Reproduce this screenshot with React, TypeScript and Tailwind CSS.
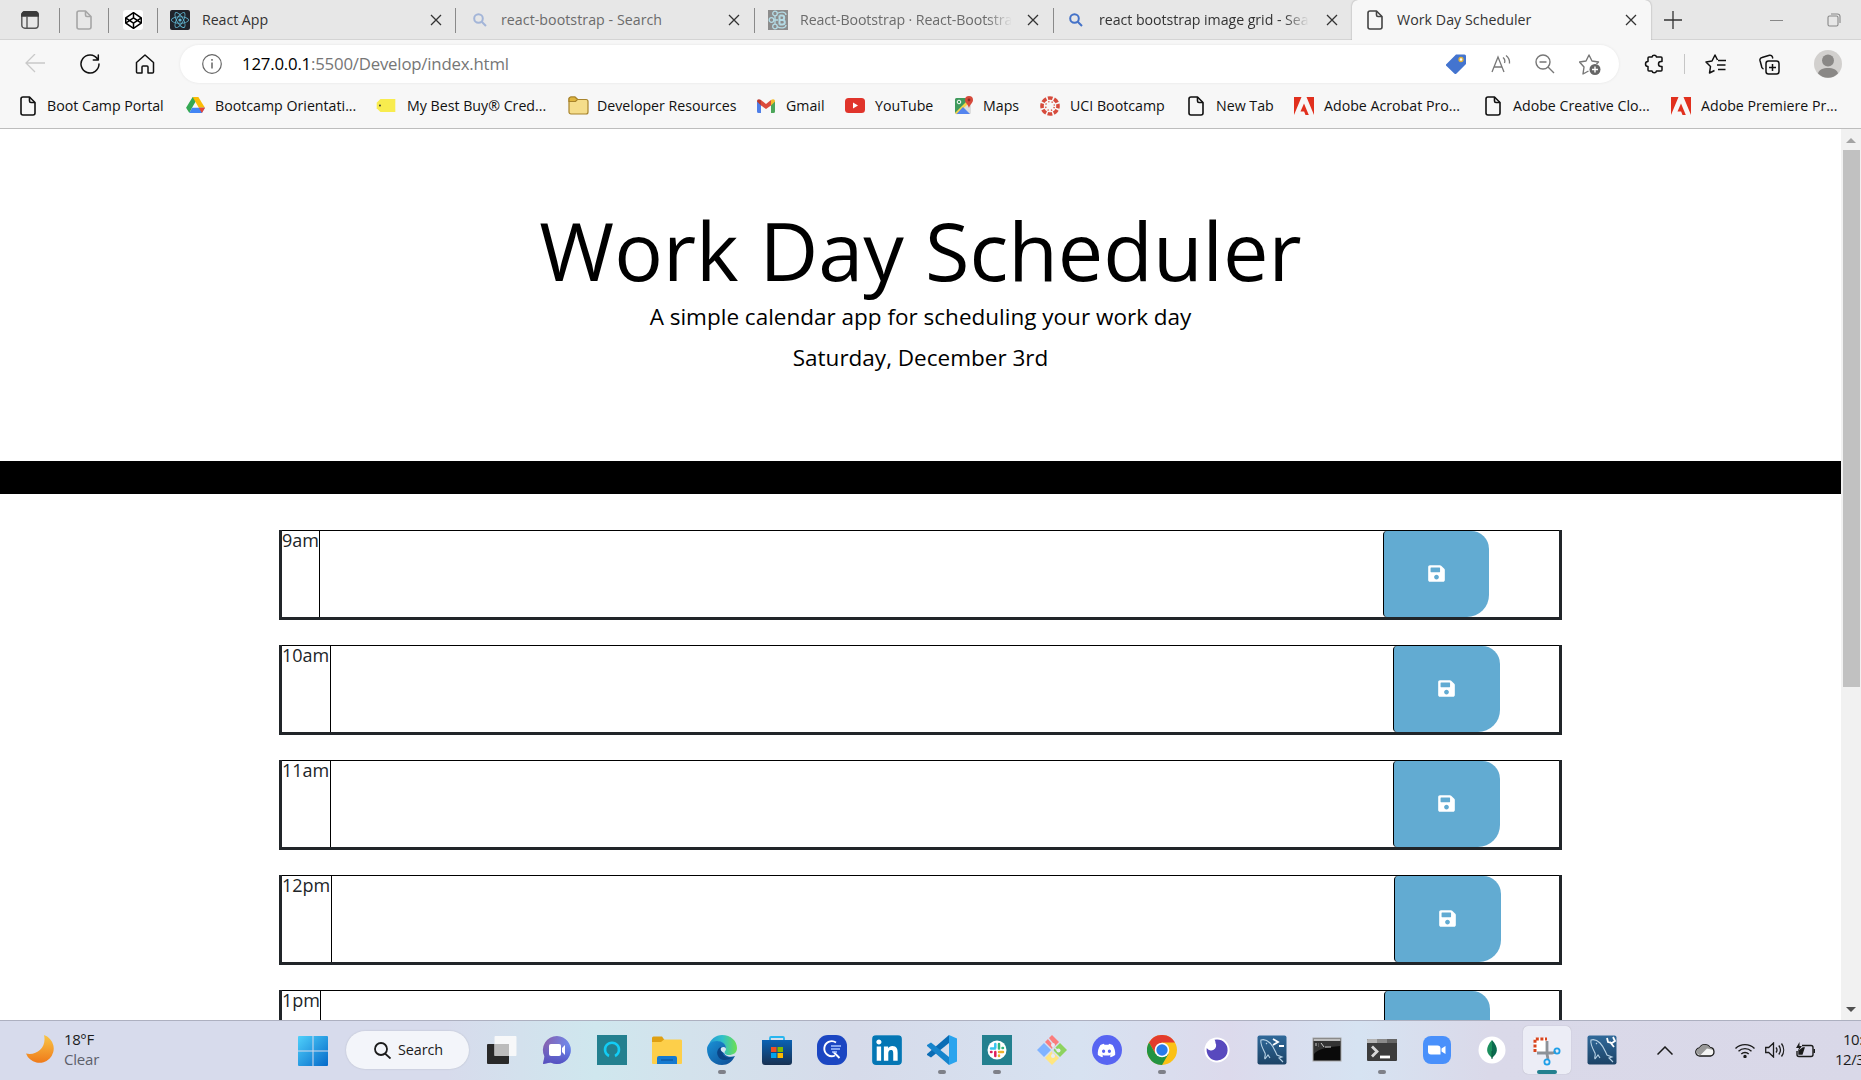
import React from "react";
import { FaSave, FaDiscord, FaLinkedin, FaCodepen, FaReact } from "react-icons/fa";

type IconProps = { className?: string };

const Doc = ({ className = "text-[#111]" }: IconProps) => (
  <svg viewBox="0 0 16 20" className={"h-5 w-4 shrink-0 " + className} fill="none" stroke="currentColor" strokeWidth="1.6" strokeLinejoin="round">
    <path d="M3 1h6.500L15 6.500V17a2 2 0 0 1-2 2H3a2 2 0 0 1-2-2V3a2 2 0 0 1 2-2z" />
    <path d="M9.500 1v4a1.500 1.500 0 0 0 1.500 1.500h4" />
  </svg>
);

const Close = () => (
  <svg viewBox="0 0 12 12" className="h-3 w-3 shrink-0 text-[#333]" stroke="currentColor" strokeWidth="1.300">
    <path d="M1 1l10 10M11 1L1 11" />
  </svg>
);

const Magnifier = ({ className = "" }: IconProps) => (
  <svg viewBox="0 0 14 14" className={"h-3.5 w-3.5 shrink-0 " + className} fill="none" stroke="currentColor" strokeWidth="2">
    <circle cx="5.500" cy="5.500" r="4.300" />
    <path d="M8.700 8.700l4.300 4.300" />
  </svg>
);

const Divider = () => <div className="h-[25px] w-px shrink-0 bg-[#8a8a8a]" />;

const ReactBootstrapIcon = () => (
  <svg viewBox="0 0 20 20" className="h-5 w-5 shrink-0">
    <rect width="20" height="20" fill="#8c8c8c" />
    <g fill="none" stroke="#b4dbe5" strokeWidth="1.300">
      <circle cx="7" cy="3.500" r="2.300" />
      <circle cx="3.500" cy="10" r="2.300" />
      <circle cx="7" cy="16.500" r="2.300" />
      <path d="M9 3.500c4-2.500 9-1.500 9 1.500M9 16.500c4 2.500 9 1.500 9-1.500M6 10h4M7 6v8" />
      <path d="M11.500 5.500v9M11.500 5.500h2.500a2.200 2.200 0 0 1 0 4.400h-2.500h3a2.300 2.300 0 0 1 0 4.600h-3" strokeWidth="2" />
    </g>
  </svg>
);

function TabBar() {
  return (
    <div className="flex h-10 w-full items-center bg-[#e7e7e7] text-[14.2px] text-[#333] shadow-[inset_0_-1px_0_#d4d4d4]">
      <div className="flex w-[59px] justify-center">
        <svg viewBox="0 0 18 18" className="h-[18px] w-[18px]" fill="none" stroke="#555" strokeWidth="1.400">
          <rect x=".8" y=".8" width="16.400" height="16.400" rx="3" />
          <path d="M3.800.8h10.400a3 3 0 0 1 3 3V5H.8V3.800a3 3 0 0 1 3-3z" fill="#3b3b3b" stroke="#3b3b3b" />
          <path d="M6 5v12" />
        </svg>
      </div>
      <Divider />
      <div className="flex w-12 justify-center"><Doc className="text-[#a6a6a6]" /></div>
      <Divider />
      <div className="flex w-12 justify-center">
        <div className="flex h-5 w-5 items-center justify-center rounded-[3px] bg-white text-black"><FaCodepen size={17} /></div>
      </div>
      <Divider />
      <div className="flex w-[297px] items-center pl-3 pr-[13px]">
        <div className="flex h-5 w-5 items-center justify-center rounded-[2px] bg-[#20232a] text-[#61b8d4]"><FaReact size={18} /></div>
        <span className="ml-3 flex-1 tracking-[-0.05px]">React App</span>
        <Close />
      </div>
      <Divider />
      <div className="flex w-[298px] items-center pl-[17px] pr-[14px] text-[#6b6b6b]">
        <Magnifier className="text-[#a3b5d8]" />
        <span className="ml-[14px] flex-1 tracking-[0.05px]">react-bootstrap - Search</span>
        <Close />
      </div>
      <Divider />
      <div className="flex w-[298px] items-center pl-[13px] pr-[14px] text-[#6b6b6b]">
        <ReactBootstrapIcon />
        <div className="ml-3 whitespace-nowrap tracking-[-0.1px] [mask-image:linear-gradient(to_right,black_88%,transparent)]">React-Bootstrap · React-Bootstra</div>
        <div className="flex-1" />
        <Close />
      </div>
      <Divider />
      <div className="flex w-[298px] items-center pl-[15px] pr-[14px]">
        <Magnifier className="text-[#4472c8]" />
        <div className="ml-4 whitespace-nowrap tracking-[-0.05px] [mask-image:linear-gradient(to_right,black_88%,transparent)]">react bootstrap image grid - Sea</div>
        <div className="flex-1" />
        <Close />
      </div>
      <div className="flex h-10 w-[299px] items-center rounded-t-[6px] bg-[#f7f7f7] pl-[15px] pr-[14px] shadow-[0_0_2px_rgba(0,0,0,0.35)] [clip-path:inset(0_-3px_0_-3px)]">
        <Doc className="text-[#444]" />
        <span className="ml-[14px] flex-1 tracking-[0.05px]">Work Day Scheduler</span>
        <Close />
      </div>
      <svg viewBox="0 0 18 18" className="ml-[13px] h-[18px] w-[18px]" stroke="#333" strokeWidth="1.300"><path d="M9 0v18M0 9h18" /></svg>
      <div className="ml-[88px] h-px w-[13px] bg-[#888]" />
      <svg viewBox="0 0 14 14" className="ml-11 h-3.5 w-3.5" fill="none" stroke="#888" strokeWidth="1.100">
        <rect x="1" y="3" width="10" height="10" rx="1.500" />
        <path d="M4 1h6.500A2.500 2.500 0 0 1 13 3.500V10" />
      </svg>
    </div>
  );
}

function AddressBar() {
  return (
    <div className="flex h-[48px] w-full items-center bg-[#f7f7f7]">
      <svg viewBox="0 0 20 20" className="ml-[25px] h-5 w-5 shrink-0" fill="none" stroke="#c9c9c9" strokeWidth="1.300"><path d="M20 9H1M10 0L1 9l9 9" /></svg>
      <svg viewBox="0 0 20 20" className="ml-[35px] h-5 w-5 shrink-0" fill="none" stroke="#111" strokeWidth="1.500" strokeLinecap="round" strokeLinejoin="round"><path d="M17.500 5A9 9 0 1 0 19 10M18.300 1v5h-5" /></svg>
      <svg viewBox="0 0 20 20" className="ml-[35px] h-5 w-5 shrink-0" fill="none" stroke="#111" strokeWidth="1.500" strokeLinejoin="round"><path d="M1.500 8.500L10 1l8.500 7.500V18a1 1 0 0 1-1 1H13v-6a1 1 0 0 0-1-1H8a1 1 0 0 0-1 1v6H2.500a1 1 0 0 1-1-1z" /></svg>
      <div className="ml-[25px] flex h-[38px] w-[1439px] shrink-0 items-center rounded-full bg-white shadow-[0_0_3px_rgba(0,0,0,0.08)]">
        <svg viewBox="0 0 20 20" className="ml-[22px] h-5 w-5" fill="none" stroke="#666" strokeWidth="1.200"><circle cx="10" cy="10" r="9.300" /><path d="M10 8.500v6M10 5v1.700" strokeWidth="1.500" /></svg>
        <span className="ml-[20px] flex-1 text-[16.800px] tracking-[-0.2px] text-[#767676]"><span className="text-black">127.0.0.1</span>:5500/Develop/index.html</span>
        <svg viewBox="0 0 20 20" className="h-5 w-5"><path d="M10 .5h8.500A1.500 1.500 0 0 1 20 2v8L10.500 19.500a1.500 1.500 0 0 1-2.200 0L.5 12a1.200 1.200 0 0 1 0-2z" fill="#4374cf" /><circle cx="15" cy="5.500" r="2" fill="#fff" stroke="#e0b33a" strokeWidth="1.300" /></svg>
        <svg viewBox="0 0 20 20" className="ml-[25px] h-5 w-5" fill="none" stroke="#777" strokeWidth="1.300"><path d="M1 18L7 3l6 15M3 13h8M12 3.500a5 5 0 0 1 1.500 5.500M15 1.500a9 9 0 0 1 3.500 8" /></svg>
        <svg viewBox="0 0 20 20" className="ml-6 h-5 w-5" fill="none" stroke="#777" strokeWidth="1.400"><circle cx="8" cy="8" r="7" /><path d="M13 13l6 6M4.500 8h7" /></svg>
        <svg viewBox="0 0 22 21" className="ml-6 mr-[18px] h-[21px] w-[22px]" fill="none" stroke="#777" strokeWidth="1.400" strokeLinejoin="round"><path d="M9.500 17L4 20l1-7-4.500-5 6.500-1 3-6 3 6 6.500 1-2 2" /><circle cx="16" cy="15.500" r="5.500" fill="#666" stroke="none" /><path d="M16 12.500v6M13 15.500h6" stroke="#fff" /></svg>
      </div>
      <svg viewBox="0 0 20 20" className="ml-[25px] h-5 w-5 shrink-0" fill="none" stroke="#111" strokeWidth="1.500" strokeLinejoin="round"><path d="M5 3h3a2.300 2.300 0 0 1 4.500 0H17a1 1 0 0 1 1 1v3.500h-1a2.500 2.500 0 0 0 0 5h1V16a1 1 0 0 1-1 1h-4.500a2.300 2.300 0 0 1-4.500 0H5a1 1 0 0 1-1-1v-3.500a2.500 2.500 0 0 1 0-5V4a1 1 0 0 1 1-1z" /></svg>
      <div className="ml-5 h-5 w-px shrink-0 bg-[#c6c6c6]" />
      <svg viewBox="0 0 21 20" className="ml-[20px] h-5 w-[21px] shrink-0" fill="none" stroke="#111" strokeWidth="1.500" strokeLinejoin="round"><path d="M9.500 16.500L4.500 19l1-6.500L1 8l6-1 3-6 2.500 5M13 6.500h8M12 11h8.500M13 15.500h7.500" /></svg>
      <svg viewBox="0 0 21 21" className="ml-[33px] h-[21px] w-[21px] shrink-0" fill="none" stroke="#111" strokeWidth="1.500" strokeLinejoin="round"><rect x="7" y="7" width="13" height="13" rx="2.500" /><path d="M13.500 10v7M10 13.500h7M4.500 15A3 3 0 0 1 2.500 12L1 6.500a2.500 2.500 0 0 1 2-3L10.500 1.200a2.500 2.500 0 0 1 3 2l.3 1.300" /></svg>
      <svg viewBox="0 0 28 28" className="ml-[34px] h-7 w-7 shrink-0"><circle cx="14" cy="14" r="14" fill="#d2d0ce" /><circle cx="14" cy="10.500" r="6" fill="#8a8886" /><path d="M4 23.500c1-4 5-5.500 10-5.500s9 1.500 10 5.500a14 14 0 0 1-20 0z" fill="#8a8886" /></svg>
    </div>
  );
}

const DriveIcon = () => (
  <svg viewBox="0 0 20 18" className="h-[17px] w-[19px]"><path d="M7 0h6L6.300 11.500 3.500 17 0 11.500z" fill="#34a853" /><path d="M7 0h6l7 11.500h-6.500z" fill="#fbbc04" /><path d="M6.300 11.500H20L16.800 17H3.500z" fill="#4285f4" /><path d="M13.500 11.500H20L16.800 17z" fill="#ea4335" /></svg>
);
const BestBuyIcon = () => (
  <svg viewBox="0 0 20 14" className="h-[13px] w-5"><path d="M4 0h16v14H4L0 10V4z" fill="#f8ec4e" /><circle cx="3.500" cy="7" r="1" fill="#333" /></svg>
);
const FolderIcon = () => (
  <svg viewBox="0 0 21 19" className="h-[19px] w-[21px]" stroke="#a8842c" strokeWidth="1.200"><path d="M1 3a2 2 0 0 1 2-2h4l2.500 2.500H18a2 2 0 0 1 2 2V16a2 2 0 0 1-2 2H3a2 2 0 0 1-2-2z" fill="#f5dd8b" /><path d="M1 5.500V3a2 2 0 0 1 2-2h4l2.500 2.500L7.500 5.500z" fill="#dfb53e" /></svg>
);
const GmailIcon = () => (
  <svg viewBox="0 0 18 14" className="h-[14px] w-[18px]"><path d="M0 2l4 3v9H1.500A1.500 1.500 0 0 1 0 12.500z" fill="#4f7fe8" /><path d="M18 2l-4 3v9h2.500a1.500 1.500 0 0 0 1.500-1.500z" fill="#4ca65a" /><path d="M4 1l5 4 5-4v5.500L9 10 4 6.500z" fill="#db4a3c" /><path d="M14 1c2-1.500 4-1 4 1.500L14 6.500z" fill="#f3bb2b" /><path d="M4 1C2-.5 0 0 0 2.500l4 4z" fill="#b93a31" /></svg>
);
const YouTubeIcon = () => (
  <svg viewBox="0 0 20 15" className="h-[15px] w-5"><rect width="20" height="15" rx="3.500" fill="#e0342b" /><path d="M8 4.500v6l5-3z" fill="#fff" /></svg>
);
const MapsIcon = () => (
  <svg viewBox="0 0 18 19" className="h-[19px] w-[18px]"><rect y="2" width="16" height="16" rx="1.500" fill="#ddd" /><path d="M0 3.500A1.500 1.500 0 0 1 1.500 2H11v5L0 17.500z" fill="#3f9a5c" /><path d="M0 17L12 5l2 2L2 18.500z" fill="#f6d44a" /><path d="M8 11l7 7H1.500z" fill="#5484ee" /><path d="M14 0a4 4 0 0 1 4 4c0 3-3 4-4 8-1-4-4-5-4-8a4 4 0 0 1 4-4z" fill="#d64a3b" /><circle cx="14" cy="4" r="1.400" fill="#8e2b22" /><circle cx="4" cy="6" r="1.800" fill="none" stroke="#fff" /></svg>
);
const CanvasIcon = () => (
  <svg viewBox="0 0 20 20" className="h-5 w-5"><circle cx="10" cy="10" r="8" fill="none" stroke="#d64b3c" strokeWidth="3.600" strokeDasharray="4.700 1.583" strokeDashoffset="2.350" /><circle cx="10" cy="10" r="4.400" fill="none" stroke="#d64b3c" strokeWidth="1.300" strokeDasharray="1.300 2.156" strokeDashoffset="2.400" /></svg>
);
const AdobeIcon = () => (
  <svg viewBox="0 0 20 18" className="h-[18px] w-5" fill="#e1301e"><path d="M0 0h7.500L0 18zM12.500 0H20v18zM10 6.500L14.800 18h-3.300l-1.400-3.600H6.500z" /></svg>
);

type Bookmark = { label: string; icon: React.ReactNode; width: string; gap: string };

const bookmarks: Bookmark[] = [
  { label: "Boot Camp Portal", icon: <Doc />, width: "w-[166px]", gap: "w-[27px]" },
  { label: "Bootcamp Orientati...", icon: <DriveIcon />, width: "w-[190px]", gap: "w-[29px]" },
  { label: "My Best Buy® Cred...", icon: <BestBuyIcon />, width: "w-[192px]", gap: "w-[31px]" },
  { label: "Developer Resources", icon: <FolderIcon />, width: "w-[189px]", gap: "w-[29px]" },
  { label: "Gmail", icon: <GmailIcon />, width: "w-[88px]", gap: "w-[29px]" },
  { label: "YouTube", icon: <YouTubeIcon />, width: "w-[110px]", gap: "w-[30px]" },
  { label: "Maps", icon: <MapsIcon />, width: "w-[85px]", gap: "w-[28px]" },
  { label: "UCI Bootcamp", icon: <CanvasIcon />, width: "w-[148px]", gap: "w-[30px]" },
  { label: "New Tab", icon: <Doc />, width: "w-[106px]", gap: "w-[28px]" },
  { label: "Adobe Acrobat Pro...", icon: <AdobeIcon />, width: "w-[191px]", gap: "w-[30px]" },
  { label: "Adobe Creative Clo...", icon: <Doc />, width: "w-[186px]", gap: "w-[28px]" },
  { label: "Adobe Premiere Pr...", icon: <AdobeIcon />, width: "w-[180px]", gap: "w-[30px]" },
];

function BookmarksBar() {
  return (
    <div className="flex h-[41px] w-full items-center border-b border-[#bdbdbd] bg-[#f7f7f7] pb-1 pl-[20px] text-[14.200px] text-[#111]">
      {bookmarks.map((b) => (
        <div key={b.label} className={"flex shrink-0 items-center whitespace-nowrap " + b.width}>
          <div className={"shrink-0 " + b.gap}>{b.icon}</div>
          <span>{b.label}</span>
        </div>
      ))}
    </div>
  );
}

const hours = [
  { label: "9am", cell: "w-[38px]", field: "w-[1063px]", button: "w-[106px]" },
  { label: "10am", cell: "w-[49px]", field: "w-[1062px]", button: "w-[107px]" },
  { label: "11am", cell: "w-[49px]", field: "w-[1062px]", button: "w-[107px]" },
  { label: "12pm", cell: "w-[50px]", field: "w-[1062px]", button: "w-[107px]" },
  { label: "1pm", cell: "w-[39px]", field: "w-[1063px]", button: "w-[106px]" },
];

function Scheduler() {
  return (
    <div className="flex h-[891px] w-full">
      <div className="h-full w-[1841px] overflow-hidden bg-white font-['Open_Sans',sans-serif]">
        <header className="flex h-[365px] flex-col items-center border-b-[33px] border-black pt-[76px] text-black">
          <h1 className="text-[81px] leading-[89px]">Work Day Scheduler</h1>
          <p className="mt-[6px] text-[22.500px] leading-[34px]">A simple calendar app for scheduling your work day</p>
          <p className="mt-[7px] text-[22.500px] leading-[34px]">Saturday, December 3rd</p>
        </header>
        <main className="ml-[279px] mt-9 flex w-[1283px] flex-col gap-[25px]">
          {hours.map((h) => (
            <div key={h.label} className="flex h-[90px] border-x-[3px] border-b-[3px] border-[#212529]">
              <div className={"shrink-0 border-r border-t border-black text-[18px] leading-[18px] text-[#212529] " + h.cell}>{h.label}</div>
              <div className={"shrink-0 border-t border-black " + h.field} />
              <div className="flex flex-1 border-t border-black">
                <button className={"flex items-center justify-center rounded-l-[4px] rounded-br-[22px] rounded-tr-[18px] border-l border-black bg-[#62abd2] pb-px pr-px text-white " + h.button}>
                  <FaSave size={19} />
                </button>
              </div>
            </div>
          ))}
        </main>
      </div>
      <div className="flex h-full w-5 flex-col items-center justify-between bg-[#f1f1f1] pb-2 pt-[9px]">
        <svg viewBox="0 0 10 5" className="h-[5px] w-[10px]" fill="#a3a3a3"><path d="M0 5l5-5 5 5z" /></svg>
        <div className="mb-auto mt-[7px] h-[537px] w-[17px] bg-[#c1c1c1]" />
        <svg viewBox="0 0 10 5" className="h-[5px] w-[10px]" fill="#505050"><path d="M0 0l5 5 5-5z" /></svg>
      </div>
    </div>
  );
}

const MoonIcon = () => (
  <svg viewBox="0 0 28 28" className="h-7 w-7"><defs><linearGradient id="moon" x2="0" y2="1"><stop stopColor="#f9c646" /><stop offset="1" stopColor="#ef7a1a" /></linearGradient></defs><path d="M18 0a14.300 14.300 0 1 1-18 18.500C11 21 21 12 18 0z" fill="url(#moon)" /></svg>
);
const WindowsIcon = () => (
  <svg viewBox="0 0 30 30" className="h-[30px] w-[30px]"><defs><linearGradient id="win" x2="1" y2="1"><stop stopColor="#4fd0fb" /><stop offset="1" stopColor="#0469c9" /></linearGradient></defs><path d="M1 0h13.500v14.500H0V1a1 1 0 0 1 1-1zM15.500 0H29a1 1 0 0 1 1 1v13.500H15.500zM0 15.500h14.500V30H1a1 1 0 0 1-1-1zM15.500 15.500H30V29a1 1 0 0 1-1 1H15.500z" fill="url(#win)" /></svg>
);
const TaskViewIcon = () => (
  <svg viewBox="0 0 30 30" className="h-[30px] w-[30px]"><rect y="9" width="22" height="20" rx="1" fill="#292929" /><rect x="7.500" y="1" width="22" height="20" rx="1" fill="#fafafa" fillOpacity=".92" /><path d="M7.500 9H22v12H7.500z" fill="#bcbcbc" /></svg>
);
const ChatIcon = () => (
  <svg viewBox="0 0 30 30" className="h-[30px] w-[30px]"><defs><linearGradient id="chat" x1="0" x2="1" y2=".3"><stop stopColor="#8a5ca8" /><stop offset="1" stopColor="#6d8cf0" /></linearGradient><linearGradient id="chat2" x2="0" y2="1"><stop offset=".3" stopColor="#5059c9" stopOpacity="0" /><stop offset="1" stopColor="#5550c0" /></linearGradient></defs><path d="M15 1a14 14 0 1 1-6.500 26.500L1 29l1.500-7.500A14 14 0 0 1 15 1z" fill="url(#chat)" /><path d="M15 1a14 14 0 1 1-6.500 26.500L1 29l1.500-7.500A14 14 0 0 1 15 1z" fill="url(#chat2)" /><rect x="7" y="9" width="12" height="12" rx="2" fill="#fff" /><path d="M20 13l3-3v10l-3-3z" fill="#fff" /></svg>
);
const AlexaIcon = () => (
  <svg viewBox="0 0 30 30" className="h-[30px] w-[30px]"><rect width="30" height="30" fill="#23808f" /><path d="M12 21a7 7 0 1 1 6 0" fill="none" stroke="#12cdf5" strokeWidth="2.500" /></svg>
);
const ExplorerIcon = () => (
  <svg viewBox="0 0 30 30" className="h-[30px] w-[30px]"><path d="M0 3a1.500 1.500 0 0 1 1.500-1.500H10L12.500 5v6H0z" fill="#dfa012" /><path d="M0 7h9l3-2.500h17A1.500 1.500 0 0 1 30 6v22a1 1 0 0 1-1 1H1a1 1 0 0 1-1-1z" fill="#fdcf4a" /><path d="M5 29v-6a2 2 0 0 1 2-2h16a2 2 0 0 1 2 2v6z" fill="#157ad0" /><path d="M9 25h12" stroke="#0b4d92" /></svg>
);
const EdgeIcon = () => (
  <svg viewBox="0 0 30 30" className="h-[30px] w-[30px]"><defs><linearGradient id="edgeTop" x2="1"><stop stopColor="#2396d8" /><stop offset=".5" stopColor="#2fc0c9" /><stop offset="1" stopColor="#6de04f" /></linearGradient><linearGradient id="edgeLow" x2="1" y2="1"><stop stopColor="#1a91d6" /><stop offset="1" stopColor="#0d4a92" /></linearGradient></defs><path d="M1 12C3 4 9 0 15 0c9 0 15 6 15 13 0 5-4 7-8 7-4 0-5-2-4-4 3-6-3-10-9-9-4 .500-7 3-8 5z" fill="url(#edgeTop)" /><path d="M0 14c0-5 5-8 10-8 5 0 9 3 9 7 0 2-2 2-2 4 0 4 6 6 11 4-3 6-7 9-13 9C6 30 0 23 0 14z" fill="url(#edgeLow)" /><path d="M14 12c-3 1-5 5-3 9 2 5 9 5 15 1-5 2-12-1-10-6z" fill="#0b4486" /><path d="M14 13c2-2 5-1 5 1s-2 2-2 4c-2-1-4-3-3-5z" fill="#d5e7f3" /></svg>
);
const StoreIcon = () => (
  <svg viewBox="0 0 30 30" className="h-[30px] w-[30px]"><path d="M8 7V3a1 1 0 0 1 1-1h12a1 1 0 0 1 1 1v4" fill="none" stroke="#27b6ef" strokeWidth="1.800" /><defs><linearGradient id="store" x2="0" y2="1"><stop stopColor="#0a62b4" /><stop offset="1" stopColor="#183152" /></linearGradient></defs><path d="M0 5h30v22a3 3 0 0 1-3 3H3a3 3 0 0 1-3-3z" fill="url(#store)" /><path d="M9 12h5.500v5H9z" fill="#f25022" /><path d="M15.500 12H21v5h-5.500z" fill="#7fba00" /><path d="M9 18h5.500v5H9z" fill="#00a4ef" /><path d="M15.500 18H21v5h-5.500z" fill="#ffb900" /></svg>
);
const InspectIcon = () => (
  <svg viewBox="0 0 30 30" className="h-[30px] w-[30px]"><rect width="30" height="30" rx="11" fill="#1b46c2" /><path d="M19 7.500a7.500 7.500 0 1 0-1 13M16.500 17l6 6" fill="none" stroke="#fff" strokeWidth="1.900" /><path d="M14 11h10M14 14h9M15 17h5" stroke="#a9c5ff" strokeWidth="1.600" /></svg>
);
const LinkedInIcon = () => (
  <div className="flex h-[30px] w-[30px] items-center justify-center overflow-hidden rounded-[4px] bg-white text-[#0476b4]"><FaLinkedin size={34} className="shrink-0" /></div>
);
const VsCodeIcon = () => (
  <svg viewBox="0 0 30 30" className="h-[30px] w-[30px]"><path d="M22 0v8L4 22.500 0 20V19z" fill="#0a6cb4" /><path d="M4 7.500L22 22v8L0 11v-1z" fill="#1684cc" /><path d="M22 0l8 3.500v23L22 30z" fill="#2aa4ee" /></svg>
);
const SlackIcon = () => (
  <svg viewBox="0 0 30 30" className="h-[30px] w-[30px]"><rect width="30" height="30" fill="#23808f" /><circle cx="15" cy="15" r="9.500" fill="#fff" /><g strokeWidth="2.500" strokeLinecap="round"><path d="M13.300 9v3.700M9 13.500h4" stroke="#36c5f0" /><path d="M17 9v4.500M21 13h-.5" stroke="#2eb67d" /><path d="M17 17h4M17 21v-.5" stroke="#ecb22e" /><path d="M13.300 17v4M9 17h.5" stroke="#e01e5a" /></g></svg>
);
const GitIcon = () => (
  <svg viewBox="0 0 30 30" className="h-[30px] w-[30px]"><path d="M15 0l7 7-7 7-7-7z" fill="#fb7d7d" /><path d="M7 8l7 7-7 7-7-7z" fill="#80b3ff" /><path d="M23 8l7 7-7 7-7-7z" fill="#8dd35f" /><path d="M15 16l7 7-7 7-7-7z" fill="#ffe680" /><path d="M11 3l5 6v12M16 11l5 5" fill="none" stroke="#d9dfee" strokeWidth="1.400" /><circle cx="16" cy="10" r="2" fill="#e8ebf5" /><circle cx="16" cy="21" r="2" fill="#e8ebf5" /><circle cx="21.500" cy="15.500" r="2" fill="#e8ebf5" /></svg>
);
const DiscordIcon = () => (
  <div className="flex h-[30px] w-[30px] items-center justify-center rounded-full bg-[#5865f2] text-white"><FaDiscord size={19} /></div>
);
const ChromeIcon = () => (
  <svg viewBox="0 0 30 30" className="h-[30px] w-[30px]"><circle cx="15" cy="15" r="15" fill="#fbc116" /><path d="M2 7.500a15 15 0 0 1 26 0H15l-6.500 11z" fill="#e33b2e" /><path d="M2 7.500A15 15 0 0 0 15 30l6.500-11.250H8.500z" fill="#229342" /><circle cx="15" cy="15" r="7.300" fill="#fff" /><circle cx="15" cy="15" r="5.700" fill="#2a7bea" /></svg>
);
const InsomniaIcon = () => (
  <svg viewBox="0 0 30 30" className="h-[30px] w-[30px]"><circle cx="15" cy="15" r="12.500" fill="#fff" /><path d="M15 4.500A10.500 10.500 0 1 1 4.800 13 5 5 0 0 0 13.500 8c0-1.500-.5-2.500-1-3.200A10 10 0 0 1 15 4.500z" fill="#5849be" /></svg>
);
const MySqlIcon = ({ wrench = false }: { wrench?: boolean }) => (
  <svg viewBox="0 0 30 30" className="h-[30px] w-[30px]"><defs><linearGradient id="sql" x2="0" y2="1"><stop stopColor="#30699a" /><stop offset="1" stopColor="#1c4366" /></linearGradient></defs><rect x=".5" y=".5" width="29" height="29" rx="2" fill="url(#sql)" /><path d="M8 24c-1-2 1-3 0-6-2-4-5-9-4-13 3-1 6 0 9 3 4 4 5 8 7 12l5 2-3 1 4 4M8 24l3-4 2 3M9 8l1 1" fill="none" stroke="#b9d3e6" strokeWidth="1.100" />{wrench ? <path d="M20 3l1 4 4 1 3-2-2-4M23 7l4 5" stroke="#fff" strokeWidth="1.800" fill="none" /> : <path d="M16 4l5 3-5 3M22 11h5" stroke="#fff" strokeWidth="1.800" fill="none" />}</svg>
);
const CmdIcon = () => (
  <svg viewBox="0 0 30 30" className="h-[30px] w-[30px]"><rect x="1" y="3" width="28" height="23" fill="#0a0a0a" stroke="#a7a7a7" /><path d="M1.500 3.500h27V6h-27z" fill="#bdbdbd" /><path d="M2 19c4-5 13-7 26-8V6H2z" fill="#333" /><path d="M4 8v3M6 9h.500M6 11h.500M9 8l3 4M13 12h6" stroke="#ccc" strokeWidth="1" /></svg>
);
const TerminalIcon = () => (
  <svg viewBox="0 0 30 30" className="h-[30px] w-[30px]"><rect y="4" width="30" height="22" rx="1" fill="#3c3c3c" /><path d="M0 5a1 1 0 0 1 1-1h9v4H0z" fill="#b4b4b4" /><path d="M10 4h10v4H10z" fill="#8b8b8b" /><path d="M20 4h9a1 1 0 0 1 1 1v3H20z" fill="#666" /><path d="M5 11.500l5 5-5 5" fill="none" stroke="#d8d8d8" strokeWidth="2.800" /><path d="M13 22h10" stroke="#fff" strokeWidth="2.800" /></svg>
);
const ZoomIcon = () => (
  <svg viewBox="0 0 30 30" className="h-[30px] w-[30px]"><rect x="1" y="1" width="28" height="28" rx="8" fill="#4990fb" /><path d="M6 10.500h9.500a3 3 0 0 1 3 3v6H9a3 3 0 0 1-3-3zM19.500 13.500l4-2.500v8l-4-2.500z" fill="#fff" /></svg>
);
const MongoIcon = () => (
  <svg viewBox="0 0 30 30" className="h-[30px] w-[30px]"><circle cx="15" cy="15" r="13.500" fill="#fff" /><path d="M15 5c7 8 6 13 0 18z" fill="#0b6b4f" /><path d="M15 5c-7 8-6 13 0 18z" fill="#1c8f5d" /><path d="M15 16v8" stroke="#0b5a43" /></svg>
);
const SnipIcon = () => (
  <svg viewBox="0 0 30 30" className="h-[30px] w-[30px]" fill="none"><rect x="2" y="2" width="13" height="14" fill="#fff" /><path d="M3 16V3h12" stroke="#d9441c" strokeWidth="3" strokeDasharray="3 1.600" /><path d="M15 5v13l1 5M5 17h15l4-1" stroke="#8d9298" strokeWidth="2.800" /><circle cx="25" cy="15" r="2.600" stroke="#1e9fe8" strokeWidth="1.800" /><circle cx="15" cy="26" r="2.600" stroke="#1e9fe8" strokeWidth="1.800" /></svg>
);

type App = { name: string; icon: React.ReactNode; running?: boolean; active?: boolean };

const apps: App[] = [
  { name: "task-view", icon: <TaskViewIcon /> },
  { name: "chat", icon: <ChatIcon /> },
  { name: "alexa", icon: <AlexaIcon /> },
  { name: "explorer", icon: <ExplorerIcon /> },
  { name: "edge", icon: <EdgeIcon />, running: true },
  { name: "store", icon: <StoreIcon /> },
  { name: "inspect", icon: <InspectIcon /> },
  { name: "linkedin", icon: <LinkedInIcon /> },
  { name: "vscode", icon: <VsCodeIcon />, running: true },
  { name: "slack", icon: <SlackIcon />, running: true },
  { name: "git", icon: <GitIcon /> },
  { name: "discord", icon: <DiscordIcon /> },
  { name: "chrome", icon: <ChromeIcon />, running: true },
  { name: "insomnia", icon: <InsomniaIcon /> },
  { name: "mysql-shell", icon: <MySqlIcon /> },
  { name: "cmd", icon: <CmdIcon /> },
  { name: "terminal", icon: <TerminalIcon />, running: true },
  { name: "zoom", icon: <ZoomIcon /> },
  { name: "mongo", icon: <MongoIcon /> },
  { name: "snip", icon: <SnipIcon />, active: true },
  { name: "mysql-workbench", icon: <MySqlIcon wrench /> },
];

function Taskbar() {
  return (
    <div className="flex h-[60px] w-full overflow-hidden border-t border-[#adb0c0] bg-[linear-gradient(to_right,#d7dbec_0%,#d7dbec_24%,#cfe7ee_32%,#d3e2ec_37%,#d6dbea_46%,#d7e2f1_58%,#dcdaec_66%,#d6e3f2_73%,#dad9e9_80%,#d9d8e8_100%)] text-[15px] text-[#1b1b1b]">
      <div className="flex w-[298px] shrink-0 pl-[26px] pt-[14px]">
        <MoonIcon />
        <div className="-mt-1.5 ml-[10px] leading-5 tracking-[-0.4px]">
          <div>18°F</div>
          <div className="tracking-[-0.2px] text-[#5c5f6a]">Clear</div>
        </div>
      </div>
      <div className="shrink-0 pt-[15px]"><WindowsIcon /></div>
      <div className="ml-[18px] mt-[10px] flex h-[38px] w-[123px] shrink-0 items-center rounded-full bg-[#f3f5fa] shadow-[0_0_2px_rgba(0,0,0,0.15)]">
        <svg viewBox="0 0 17 17" className="ml-7 h-[17px] w-[17px]" fill="none" stroke="#1b1b1b" strokeWidth="1.800"><circle cx="7" cy="7" r="6" /><path d="M11 11.500l5.500 5" /></svg>
        <span className="ml-[7px] text-[14.400px] tracking-[-0.1px]">Search</span>
      </div>
      <div className="ml-[5px] flex shrink-0">
        {apps.map((a) => (
          <div key={a.name} className="flex w-[55px] flex-col items-center pt-[5px]">
            <div className={a.active ? "flex h-12 w-12 flex-col items-center rounded-[5px] bg-[#ecedf6] pt-[10px] shadow-[0_0_1px_rgba(0,0,0,0.25)]" : "flex h-12 w-12 flex-col items-center pt-[9px]"}>
              {a.icon}
              {a.running && <div className="mt-[5px] h-1 w-2 shrink-0 rounded-full bg-[#7e8088]" />}
              {a.active && <div className="mt-1 h-1 w-5 shrink-0 rounded-full bg-[#23808f]" />}
            </div>
          </div>
        ))}
      </div>
      <div className="ml-[28px] flex h-[58px] shrink-0 items-center">
        <svg viewBox="0 0 16 9" className="h-[9px] w-4" fill="none" stroke="#1b1b1b" strokeWidth="1.500"><path d="M.500 8.500L8 1l7.500 7.500" /></svg>
        <svg viewBox="0 0 20 14" className="ml-[22px] h-[14px] w-5" stroke="#1b1b1b" strokeWidth="1.300"><path d="M5 13a4 4 0 0 1-.5-8A6 6 0 0 1 15 4.500 4.300 4.300 0 0 1 15.500 13z" fill="#f4f4f4" /><path d="M1.500 10A4 4 0 0 1 4.500 5 6 6 0 0 1 15 4.500L18.500 7 12 5.500 5 12.500z" fill="#999" stroke="none" /></svg>
        <svg viewBox="0 0 20 15" className="ml-5 h-[15px] w-5" fill="none" stroke="#1b1b1b" strokeWidth="1.400"><path d="M.500 5.500a13.500 13.500 0 0 1 19 0M3.500 8.300a9.300 9.300 0 0 1 13 0M6.300 11a5.300 5.300 0 0 1 7.400 0" /><circle cx="10" cy="13.500" r="1" fill="#1b1b1b" /></svg>
        <svg viewBox="0 0 20 16" className="ml-[10px] h-4 w-5" fill="none" stroke="#1b1b1b" strokeWidth="1.300"><path d="M.700 5.500h3L8.500 1v14l-4.800-4.500h-3zM11 5.500a4 4 0 0 1 0 5M13.800 3.500a7.500 7.500 0 0 1 0 9M16.500 1.500a11 11 0 0 1 0 13" /></svg>
        <svg viewBox="0 0 20 16" className="ml-[10px] h-4 w-5" fill="none" stroke="#1b1b1b" strokeWidth="1.400"><path d="M7 3.500h9a2 2 0 0 1 2 2v7a2 2 0 0 1-2 2H4a2 2 0 0 1-2-2V9" /><path d="M19.300 7v4" strokeWidth="1.600" /><path d="M8 6h1l-2 6H4V9z" fill="#1b1b1b" /><path d="M4.500 0L1 6h3L2.500 10 7 4H4.500z" fill="#1b1b1b" stroke="none" /></svg>
      </div>
      <div className="ml-5 mt-2 shrink-0 whitespace-nowrap leading-5 tracking-[-0.5px]">
        <div className="pl-2">10:</div>
        <div>12/3</div>
      </div>
    </div>
  );
}

export default function App() {
  return (
    <div className="flex h-[1080px] w-[1861px] flex-col overflow-hidden bg-white font-['Open_Sans',sans-serif]">
      <TabBar />
      <AddressBar />
      <BookmarksBar />
      <Scheduler />
      <Taskbar />
    </div>
  );
}
